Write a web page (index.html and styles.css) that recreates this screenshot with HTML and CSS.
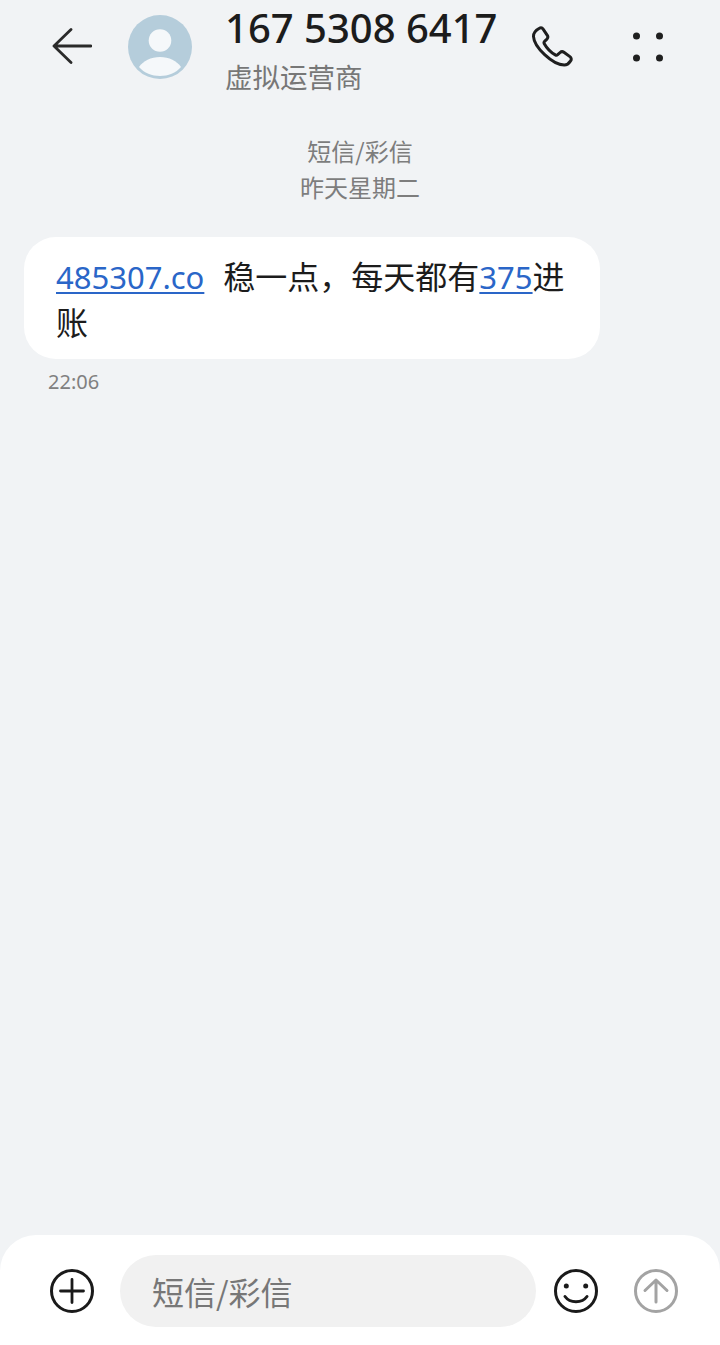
FILE: index.html
```html
<!DOCTYPE html>
<html lang="zh">
<head>
<meta charset="utf-8">
<title>短信</title>
<link rel="stylesheet" href="styles.css">
</head>
<body>
<div class="page">
  <header class="top">
    <svg class="ic-back" viewBox="0 0 40 36" width="40" height="36"><path d="M19 1.500 2 18l17 16.500M2 18h37" fill="none" stroke="#2a2a2a" stroke-width="2.800" stroke-linecap="round" stroke-linejoin="round"/></svg>
    <svg class="avatar" viewBox="0 0 64 64" width="64" height="64"><circle cx="32" cy="32" r="32" fill="#b5cddb"/><circle cx="32" cy="25.500" r="11.300" fill="#f5f8fa"/><path d="M11 52C15 46 23 42 32 42s17 4 21 10C48 58 40 61 32 61S16 58 11 52Z" fill="#f5f8fa"/></svg>
    <div class="who">
      <div class="num">167 5308 6417</div>
      <div class="carrier">虚拟运营商</div>
    </div>
    <svg class="ic-phone" viewBox="0 0 42 42" width="42" height="42"><path d="M8 2.500c1.500-1 3.300-.7 4.300.8l4 6c.8 1.300.6 2.800-.4 3.800l-2.300 2.200c-.7.700-.8 1.500-.3 2.400 2.500 4.500 6.300 8.500 11 11.200.9.500 1.700.4 2.400-.2l2.400-2.200c1.100-1 2.600-1.100 3.800-.2l6 4.300c1.500 1.100 1.700 3 .7 4.300-1.500 2.300-3.700 4.200-6.300 4.200C21.500 39 3 21 2.500 10.500 2.400 7.300 5.300 4 8 2.500Z" fill="none" stroke="#1f1f1f" stroke-width="3" stroke-linejoin="round"/></svg>
    <svg class="ic-more" viewBox="0 0 32 32" width="32" height="32"><g fill="#1f1f1f"><circle cx="3.500" cy="4" r="3.500"/><circle cx="26.500" cy="4" r="3.500"/><circle cx="3.500" cy="26" r="3.500"/><circle cx="26.500" cy="26" r="3.500"/></g></svg>
  </header>
  <main class="thread">
    <div class="meta">
      <div>短信/彩信</div>
      <div>昨天星期二</div>
    </div>
    <div class="bubble"><a class="lnk">485307.co</a><span class="gap"></span>稳一点，每天都有<a class="lnk">375</a>进<br>账</div>
    <div class="time">22:06</div>
  </main>
  <footer class="composer">
    <svg class="ic" viewBox="0 0 44 44" width="44" height="44"><circle cx="22" cy="22" r="20.500" fill="none" stroke="#1a1a1a" stroke-width="3"/><path d="M10.500 22h23M22 10.500v23" fill="none" stroke="#1a1a1a" stroke-width="2.800" stroke-linecap="round"/></svg>
    <div class="input">短信/彩信</div>
    <svg class="ic" viewBox="0 0 44 44" width="44" height="44"><circle cx="22" cy="22" r="20.500" fill="none" stroke="#1a1a1a" stroke-width="3"/><circle cx="12.300" cy="17" r="2.500" fill="#1a1a1a"/><circle cx="31.700" cy="17" r="2.500" fill="#1a1a1a"/><path d="M11 27.500c5 7 17 7 22 0" fill="none" stroke="#1a1a1a" stroke-width="3" stroke-linecap="round"/></svg>
    <svg class="ic" viewBox="0 0 44 44" width="44" height="44"><circle cx="22" cy="22" r="20.500" fill="none" stroke="#a3a3a3" stroke-width="3"/><path d="M22 33V11M11 21.500 22 11l11 10.500" fill="none" stroke="#a3a3a3" stroke-width="3" stroke-linecap="round" stroke-linejoin="round"/></svg>
  </footer>
</div>
</body>
</html>
```
FILE: styles.css
```css
* { box-sizing: border-box; }
html, body { margin: 0; padding: 0; }
body {
  background: #f1f3f5;
  font-family: "Noto Sans", "Noto Sans CJK SC", sans-serif;
}
.page {
  width: 720px;
  height: 1345px;
  display: flex;
  flex-direction: column;
  overflow: hidden;
}
.top {
  display: flex;
  align-items: flex-start;
  height: 133px;
  padding: 6px 0 0 52px;
  flex: none;
}
.ic-back { margin-top: 22px; flex: none; }
.avatar { margin: 9px 0 0 36px; flex: none; }
.who { margin-left: 33px; width: 306px; flex: none; }
.num {
  font-size: 40px;
  font-weight: 500;
  line-height: 44px;
  color: #1c1c1c;
  white-space: nowrap;
}
.carrier {
  margin-top: 9px;
  font-size: 27.500px;
  line-height: 34px;
  color: #777;
  font-family: "Noto Sans CJK SC", sans-serif;
}
.ic-phone { margin-top: 20px; flex: none; }
.ic-more { margin: 26px 0 0 60px; flex: none; }
.thread {
  flex: 1;
  display: flex;
  flex-direction: column;
  align-items: flex-start;
  padding: 0 24px;
}
.meta {
  align-self: stretch;
  text-align: center;
  font-size: 24px;
  line-height: 36px;
  color: #7d7d7d;
  font-family: "Noto Sans CJK SC", sans-serif;
}
.bubble {
  width: 576px;
  margin-top: 32px;
  background: #fff;
  border-radius: 32px;
  padding: 15px 32px;
  font-size: 32px;
  line-height: 46px;
  color: #1c1c1c;
  font-family: "Noto Sans CJK SC", sans-serif;
}
.lnk {
  color: #2a66c8;
  font-size: 31px;
  line-height: 1;
  text-decoration: underline;
  text-decoration-thickness: 2px;
  text-underline-offset: 3px;
  font-family: "Noto Sans", sans-serif;
}
.gap { display: inline-block; width: 19px; }
.time {
  margin: 10px 0 0 24px;
  font-size: 20px;
  line-height: 26px;
  color: #808080;
}
.composer {
  flex: none;
  height: 110px;
  background: #fff;
  border-radius: 36px 36px 0 0;
  display: flex;
  align-items: flex-start;
  padding: 20px 0 0 50px;
}
.ic { flex: none; margin-top: 14px; }
.input {
  width: 416px;
  height: 72px;
  margin: 0 18px 0 26px;
  flex: none;
  border-radius: 36px;
  background: #f1f1f1;
  padding-left: 32px;
  font-size: 32px;
  line-height: 72px;
  color: #777;
  font-family: "Noto Sans CJK SC", sans-serif;
}
.composer .ic:last-child { margin-left: 36px; }
```
